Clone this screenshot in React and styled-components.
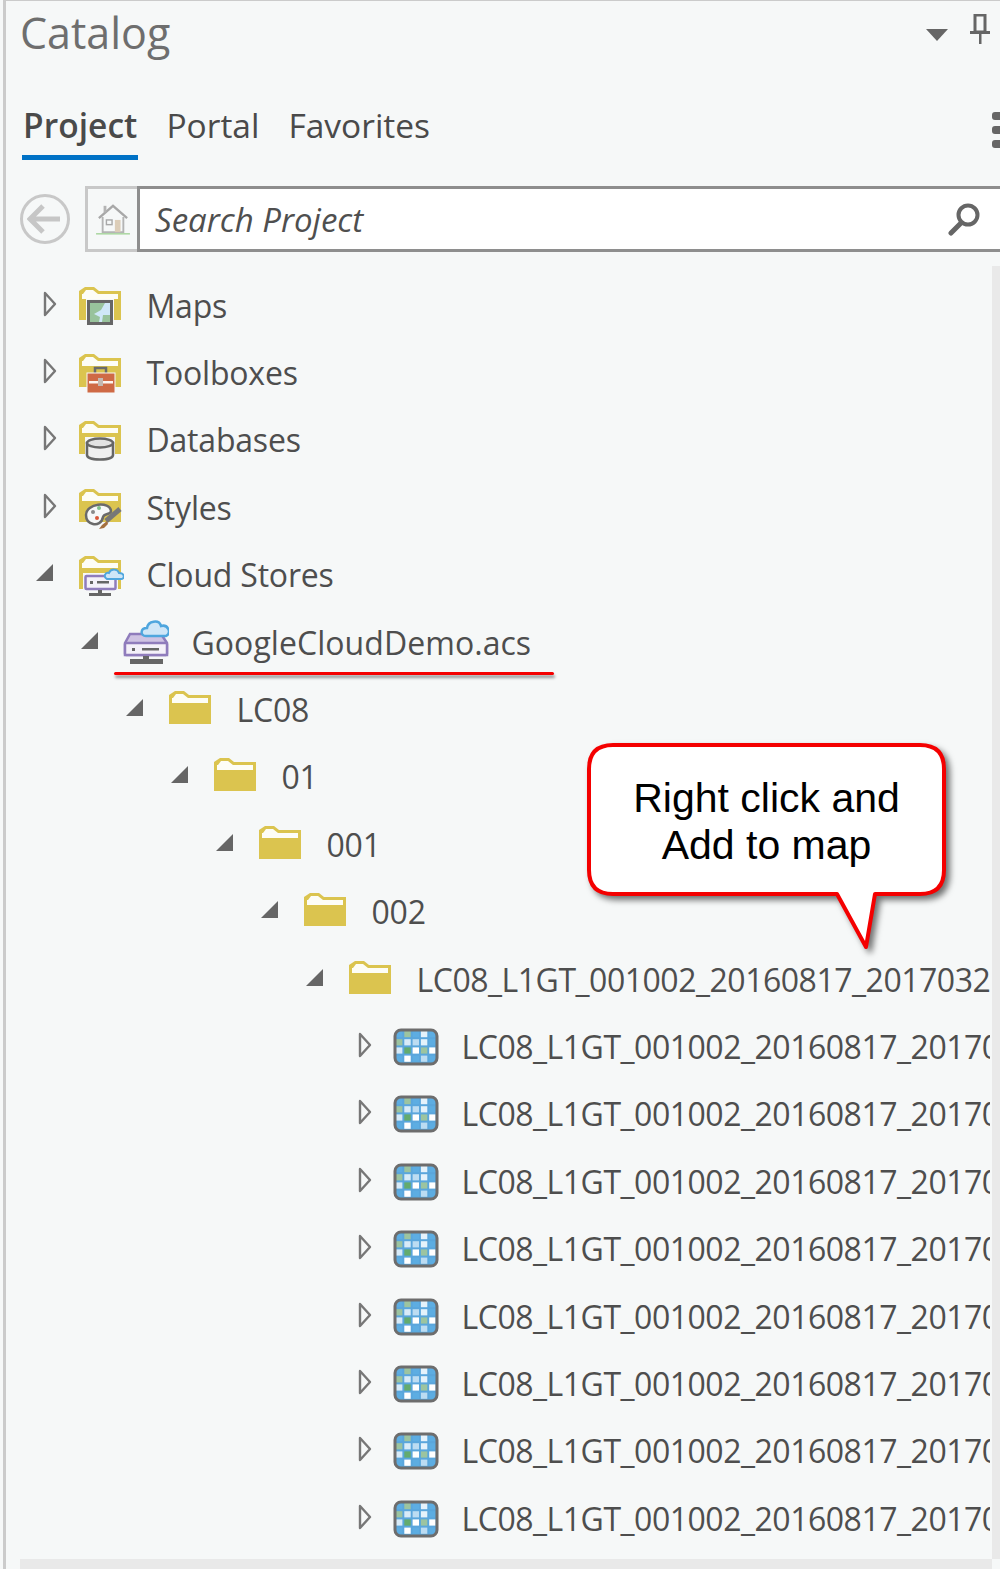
import styled, { createGlobalStyle } from 'styled-components'

const GlobalStyle = createGlobalStyle`
  html, body {
    margin: 0;
    padding: 0;
    background: #f6f8f8;
  }
  * { box-sizing: border-box; }
`

const rasterRows = [
  ['#5dade2', '#9cc4a0', '#5dade2', '#e4f2fb', '#5dade2'],
  ['#9cc4a0', '#d8ebf8', '#bcdcf2', '#e4f2fb', '#5dade2'],
  ['#d8ebf8', '#63ab6e', '#fff', '#9cc4a0', '#fff'],
  ['#5dade2', '#fff', '#5dade2', '#bcdcf2', '#5dade2'],
]

const FolderBase = ({ children }) => (
  <svg width="46" height="46" viewBox="0 0 46 46">
    <path d="M1 8 L1 37 L43 37 L43 8 L21 8 L16 4 L7 4 L1 8 Z" fill="#dbc44f" />
    <path d="M4 11 L40 11 L40 16 L4 16 Z M5 11 L8 7 L15 7 L20 11 Z" fill="#fdfdf6" />
    {children}
  </svg>
)

const MapsIcon = () => (
  <FolderBase>
    <rect x="8" y="16" width="28" height="27" fill="#f6f8f8" />
    <rect x="10.5" y="18.5" width="23" height="22" fill="#98c39c" stroke="#666" strokeWidth="3" />
    <path d="M16 31 L23 27 L27 20 L32 20 L32 32 L25 32 L24 39 L21 39 L22 34 Z" fill="#cfe8f8" />
  </FolderBase>
)

const ToolboxIcon = () => (
  <FolderBase>
    <rect x="17" y="18" width="11" height="8" fill="none" stroke="#6a6a6a" strokeWidth="2.5" />
    <rect x="9" y="23" width="28" height="20" fill="#cf6a45" stroke="#f6f8f8" strokeWidth="1" />
    <rect x="11" y="31" width="24" height="2.5" fill="#fdf5f0" />
    <rect x="20" y="28" width="5" height="8" fill="#c4b8b0" />
  </FolderBase>
)

const DatabaseIcon = () => (
  <FolderBase>
    <path d="M7 20 L37 20 L37 45 L7 45 Z" fill="#f6f8f8" />
    <path d="M9 26 L9 38 C9 44 35 44 35 38 L35 26 Z" fill="#efefef" stroke="#666" strokeWidth="2.5" />
    <ellipse cx="22" cy="26" rx="13" ry="4.5" fill="#e2e2e2" stroke="#666" strokeWidth="2.5" />
  </FolderBase>
)

const StylesIcon = () => (
  <FolderBase>
    <path d="M8 30 C8 18 32 16 33 26 C33 30 26 28 25 32 C24 38 19 40 15 39 C11 38 8 35 8 30 Z" fill="#f6f8f8" stroke="#6a6a6a" strokeWidth="2.5" />
    <circle cx="15" cy="27" r="2" fill="#8a8a8a" />
    <circle cx="21" cy="23" r="2" fill="#7cc08a" />
    <circle cx="19" cy="33" r="2" fill="#d9583a" />
    <path d="M28 36 L42 24" stroke="#777" strokeWidth="5" />
    <path d="M29 36 L24 40 L21 44 L26 43 L30 39 Z" fill="#a5703f" />
  </FolderBase>
)

const CloudStoreIcon = () => (
  <FolderBase>
    <rect x="5" y="21" width="35" height="18" fill="#f6f8f8" />
    <rect x="7.5" y="24" width="30" height="13" rx="1" fill="#f4f1f9" stroke="#8f7cbc" strokeWidth="2.5" />
    <rect x="12" y="29" width="3" height="3" fill="#666" />
    <rect x="19" y="29" width="12" height="2.5" fill="#666" />
    <rect x="20" y="38" width="4" height="3" fill="#666" />
    <rect x="11" y="41" width="22" height="3" fill="#666" />
    <path d="M29 27 C25 25 27 20 31 21 C33 16 40 17 41 21 C47 21 47 27 43 27 Z" fill="#cfe6f7" stroke="#4fa6de" strokeWidth="2" />
  </FolderBase>
)

const AcsIcon = () => (
  <svg width="46" height="50" viewBox="0 0 46 50">
    <path d="M2 25 L7 16 L38 16 L44 25 L44 37 L2 37 Z" fill="#cfc3e3" stroke="#8f7cbc" strokeWidth="2.5" />
    <rect x="2" y="25" width="42" height="12" rx="1" fill="#f4f1f9" stroke="#8f7cbc" strokeWidth="2.5" />
    <rect x="9" y="30" width="3" height="3" fill="#666" />
    <rect x="19" y="30" width="17" height="2.5" fill="#666" />
    <rect x="20" y="38" width="6" height="4" fill="#666" />
    <rect x="7" y="41" width="33" height="5" fill="#666" />
    <path d="M23 18 C17 18 17 10 24 10 C25 3 36 1 38 8 C45 6 49 15 43 18 Z" fill="#cfe6f7" stroke="#4fa6de" strokeWidth="2.5" />
  </svg>
)

const FolderIcon = () => <FolderBase />

const RasterIcon = () => (
  <svg width="46" height="38" viewBox="0 0 46 38">
    <rect x="2" y="2" width="42" height="34" rx="6" fill="#5aa6dc" />
    {rasterRows.map((cells, r) =>
      cells.map((fill, c) => (
        <rect key={`${r}-${c}`} x={3 + c * 8.3} y={3 + r * 8.2} width="6.4" height="6.2" fill={fill} />
      ))
    )}
    <rect x="2" y="2" width="42" height="34" rx="6" fill="none" stroke="#6d6d6d" strokeWidth="3" />
  </svg>
)

const Arrow = ({ open }) =>
  open ? (
    <svg width="20" height="20" viewBox="0 0 20 20">
      <path d="M1 18 L18 1 L18 18 Z" fill="#666" />
    </svg>
  ) : (
    <svg width="14" height="26" viewBox="0 0 14 26">
      <path d="M2 2 L12 13 L2 24 Z" fill="#f6f8f8" stroke="#777" strokeWidth="2.4" strokeLinejoin="round" />
    </svg>
  )

const tree = [
  { level: 0, icon: MapsIcon, label: 'Maps' },
  { level: 0, icon: ToolboxIcon, label: 'Toolboxes' },
  { level: 0, icon: DatabaseIcon, label: 'Databases' },
  { level: 0, icon: StylesIcon, label: 'Styles' },
  { level: 0, icon: CloudStoreIcon, label: 'Cloud Stores', open: true },
  { level: 1, icon: AcsIcon, label: 'GoogleCloudDemo.acs', open: true, marked: true },
  { level: 2, icon: FolderIcon, label: 'LC08', open: true },
  { level: 3, icon: FolderIcon, label: '01', open: true },
  { level: 4, icon: FolderIcon, label: '001', open: true },
  { level: 5, icon: FolderIcon, label: '002', open: true },
  { level: 6, icon: FolderIcon, label: 'LC08_L1GT_001002_20160817_2017032', open: true, file: true },
  ...Array.from({ length: 8 }, () => ({
    level: 7,
    icon: RasterIcon,
    label: 'LC08_L1GT_001002_20160817_20170',
    file: true,
  })),
]

export default function App() {
  return (
    <>
      <GlobalStyle />
      <Panel>
        <Header>
          <Title>Catalog</Title>
          <HeaderTools>
            <svg width="24" height="14" viewBox="0 0 24 14">
              <path d="M1 1 L23 1 L12 13 Z" fill="#666" />
            </svg>
            <svg width="22" height="30" viewBox="0 0 22 30">
              <path d="M6 1 L16 1 L16 18 L6 18 Z" fill="none" stroke="#666" strokeWidth="3" />
              <rect x="1" y="17" width="20" height="3" fill="#666" />
              <rect x="10" y="19" width="2.5" height="11" fill="#666" />
            </svg>
          </HeaderTools>
        </Header>

        <Tabs>
          <Tab $active>Project</Tab>
          <Tab>Portal</Tab>
          <Tab>Favorites</Tab>
          <MoreDots>
            <i />
            <i />
            <i />
          </MoreDots>
        </Tabs>

        <SearchRow>
          <BackButton>
            <svg width="36" height="30" viewBox="0 0 36 30">
              <path d="M16 2 L3 15 L16 28 M3 15 L33 15" fill="none" stroke="#c6c6c6" strokeWidth="5" />
            </svg>
          </BackButton>
          <HomeButton>
            <svg width="34" height="32" viewBox="0 0 36 34">
              <path d="M3 16 L18 3 L33 16" fill="none" stroke="#a8a8a8" strokeWidth="2.5" />
              <path d="M7 15 L7 31 L29 31 L29 15" fill="none" stroke="#b4b4b4" strokeWidth="2" />
              <rect x="8" y="3" width="3" height="7" fill="#b4b4b4" />
              <rect x="11" y="18" width="6" height="5" fill="none" stroke="#a8a8a8" strokeWidth="1.5" />
              <rect x="20" y="18" width="6" height="13" fill="#dccdb8" />
              <rect x="0" y="32" width="36" height="1.5" fill="#a5d49a" />
            </svg>
          </HomeButton>
          <SearchBox>
            <SearchText>Search Project</SearchText>
            <svg width="34" height="34" viewBox="0 0 34 34">
              <circle cx="20" cy="13" r="9.5" fill="none" stroke="#666" strokeWidth="4" />
              <path d="M13 21 L3 31" stroke="#666" strokeWidth="5" strokeLinecap="round" />
            </svg>
          </SearchBox>
        </SearchRow>

        <TreeArea>
          <Tree>
            {tree.map((item, i) => (
              <Row key={i} $level={item.level}>
                <ArrowSlot $open={item.open}>
                  <Arrow open={item.open} />
                </ArrowSlot>
                <IconSlot>
                  <item.icon />
                </IconSlot>
                <Label $file={item.file} $marked={item.marked}>{item.label}</Label>
                {item.marked && <RedLine />}
              </Row>
            ))}
          </Tree>
          <VScroll />
        </TreeArea>
        <HScroll />

        <Callout>
          <CalloutShape width="372" height="220" viewBox="0 0 372 220">
            <path
              d="M28 4 L335 4 Q359 4 359 28 L359 129 Q359 153 335 153 L290 153 L281 206 L252 153 L28 153 Q4 153 4 129 L4 28 Q4 4 28 4 Z"
              fill="#fff"
              stroke="#f40000"
              strokeWidth="4"
              strokeLinejoin="round"
            />
          </CalloutShape>
          <CalloutText>
            Right click and
            <br />
            Add to map
          </CalloutText>
        </Callout>
      </Panel>
    </>
  )
}

const Panel = styled.div`
  position: relative;
  width: 997px;
  height: 1569px;
  margin-left: 3px;
  overflow: hidden;
  display: flex;
  flex-direction: column;
  background: #f6f8f8;
  border-left: 3px solid #cbcbcb;
  border-top: 1px solid #cbcbcb;
  font-family: "Open Sans", "Noto Sans", sans-serif;
  color: #4a4a4a;
`

const Header = styled.div`
  height: 62px;
  display: flex;
  align-items: center;
  justify-content: space-between;
  padding: 0 9px 0 14px;
`

const Title = styled.div`
  font-size: 43px;
  line-height: 66px;
  margin-top: 2px;
  color: #6e6e6e;
`

const HeaderTools = styled.div`
  display: flex;
  align-items: flex-start;
  gap: 20px;
  margin-top: -6px;

  svg:first-child {
    margin-top: 14px;
  }
`

const Tabs = styled.div`
  height: 55px;
  margin-top: 42px;
  padding-left: 16px;
  display: flex;
  gap: 27px;
  position: relative;
`

const Tab = styled.div`
  height: 55px;
  padding: 0 1px;
  font-size: 33.5px;
  line-height: 40px;
  font-weight: ${(p) => (p.$active ? 600 : 400)};
  letter-spacing: ${(p) => (p.$active ? '0.05px' : '0')};
  border-bottom: ${(p) => (p.$active ? '5px solid #0072c6' : 'none')};
`

const MoreDots = styled.div`
  position: absolute;
  right: -3px;
  top: 7px;
  display: flex;
  flex-direction: column;
  gap: 6px;

  i {
    display: block;
    width: 11px;
    height: 8px;
    border-radius: 3px;
    background: #666;
  }
`

const SearchRow = styled.div`
  display: flex;
  align-items: center;
  height: 66px;
  margin-top: 26px;
  padding-left: 14px;
`

const BackButton = styled.div`
  width: 50px;
  height: 50px;
  margin-right: 15px;
  border-radius: 50%;
  border: 3px solid #c8c8c8;
  display: flex;
  align-items: center;
  justify-content: center;
`

const HomeButton = styled.div`
  width: 52px;
  height: 66px;
  border: 3px solid #c8c8c8;
  border-right: none;
  display: flex;
  align-items: center;
  justify-content: center;
`

const SearchBox = styled.div`
  flex: 1;
  height: 66px;
  background: #fff;
  border: 3px solid #8e8e8e;
  border-right: none;
  display: flex;
  align-items: center;
  justify-content: space-between;
  padding: 0 18px 0 15px;
`

const SearchText = styled.div`
  font-size: 33px;
  font-style: italic;
  color: #4f4f4f;
`

const TreeArea = styled.div`
  flex: 1;
  min-height: 0;
  display: flex;
  margin-top: 14px;
`

const Tree = styled.div`
  flex: 1;
  min-width: 0;
  overflow: hidden;
  margin-right: 2px;
  padding-top: 6px;
`

const Row = styled.div`
  position: relative;
  height: 67.4px;
  display: flex;
  align-items: center;
  padding-left: ${(p) => 30 + p.$level * 45}px;
`

const ArrowSlot = styled.div`
  width: 42px;
  flex: none;
  display: flex;
  padding-left: ${(p) => (p.$open ? '0' : '7px')};
  margin-left: ${(p) => (p.$open ? '-1px' : '0')};
  margin-right: ${(p) => (p.$open ? '1px' : '0')};
  margin-top: -4px;
`

const IconSlot = styled.div`
  width: 68.5px;
  flex: none;
  display: flex;
  align-items: center;
`

const Label = styled.div`
  font-size: 32px;
  line-height: 44px;
  white-space: nowrap;
  color: #4e4e4e;
  letter-spacing: ${(p) => (p.$file ? '-0.48px' : p.$marked ? '0.05px' : '-0.2px')};
`

const RedLine = styled.div`
  position: absolute;
  left: 108px;
  bottom: 1px;
  width: 440px;
  height: 3px;
  border-radius: 2px;
  background: #f40000;
  box-shadow: 1px 3px 3px rgba(0, 0, 0, 0.4);
`

const VScroll = styled.div`
  width: 8px;
  flex: none;
  background: #e9e9e9;
`

const HScroll = styled.div`
  height: 10px;
  flex: none;
  margin-left: 14px;
  margin-right: 8px;
  background: #e9e9e9;
`

const Callout = styled.div`
  position: absolute;
  left: 579px;
  top: 740px;
  width: 363px;
  height: 153px;
  display: flex;
  align-items: center;
  justify-content: center;
`

const CalloutShape = styled.svg`
  position: absolute;
  left: 0;
  top: 0;
  overflow: visible;
  filter: drop-shadow(4px 4px 3px rgba(0, 0, 0, 0.55));
`

const CalloutText = styled.div`
  position: relative;
  top: 4px;
  font-family: "Liberation Sans", Arial, sans-serif;
  font-size: 41px;
  line-height: 47px;
  text-align: center;
  color: #000;
`
